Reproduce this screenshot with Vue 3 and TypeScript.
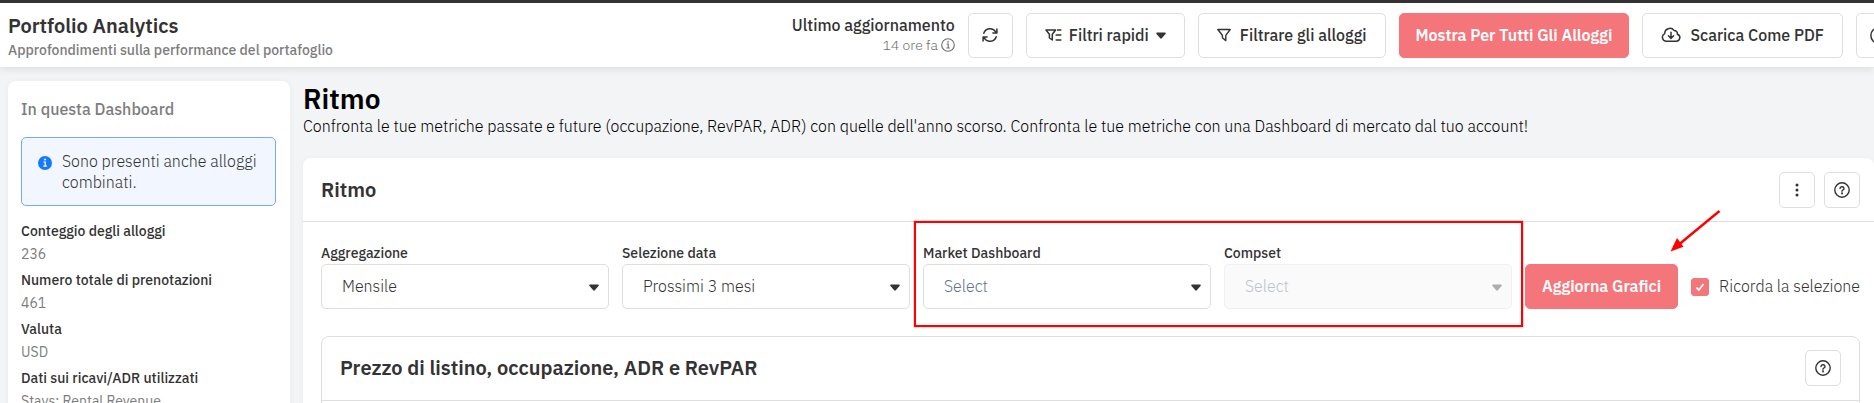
<script setup lang="ts">
import { ref } from 'vue'

interface Stat {
  label: string
  value: string
}

const stats: Stat[] = [
  { label: 'Conteggio degli alloggi', value: '236' },
  { label: 'Numero totale di prenotazioni', value: '461' },
  { label: 'Valuta', value: 'USD' },
  { label: 'Dati sui ricavi/ADR utilizzati', value: 'Stays: Rental Revenue' },
]

const aggregation = ref('Mensile')
const dateRange = ref('Prossimi 3 mesi')
const market = ref('')
const compset = ref('')
const remember = ref(true)
</script>

<template>
  <div class="page">
    <header class="topbar">
      <div class="heading">
        <h1>Portfolio Analytics</h1>
        <p>Approfondimenti sulla performance del portafoglio</p>
      </div>
      <div class="actions">
        <div class="updated">
          <strong>Ultimo aggiornamento</strong>
          <span>14 ore fa
            <svg width="14" height="14" viewBox="0 0 14 14" fill="none" stroke="currentColor">
              <circle cx="7" cy="7" r="6.3" stroke-width="1.1" />
              <path d="M5.6 6h1.6v4M5.4 10h3.4" stroke-width="1.1" />
              <circle cx="7" cy="3.9" r=".8" fill="currentColor" stroke="none" />
            </svg>
          </span>
        </div>
        <button class="btn square" type="button" aria-label="Aggiorna">
          <svg width="16" height="16" viewBox="0 0 16 16" fill="none" stroke="currentColor" stroke-width="1.5" stroke-linecap="round" stroke-linejoin="round">
            <path d="M1.8 6.3A6.5 6.5 0 0 1 13.7 5M14.9 2v4h-4M14.2 9.7A6.5 6.5 0 0 1 2.3 11M1.1 14v-4h4" />
          </svg>
        </button>
        <button class="btn quick" type="button">
          <svg width="17" height="14" viewBox="0 0 17 14" fill="none" stroke="currentColor" stroke-width="1.5" stroke-linejoin="round">
            <path d="M1 2h9.6L7.3 6.3V12L4.4 10V6.3zM12 2h4.4M10.6 7h5.8M10.6 12h5.8" />
          </svg>
          Filtri rapidi
          <svg class="caret" width="10" height="7" viewBox="0 0 10 7"><path d="M1 .5h8c.8 0 1 .8.5 1.4L6 6.1c-.6.7-1.4.7-2 0L.5 1.9C0 1.3.2.5 1 .5z" fill="currentColor" /></svg>
        </button>
        <button class="btn" type="button">
          <svg width="14" height="14" viewBox="0 0 14 14" fill="none" stroke="currentColor" stroke-width="1.4" stroke-linejoin="round">
            <path d="M.8 1.5h12.4L8.8 7.3v5.3L5.4 9.8V7.3z" />
          </svg>
          Filtrare gli alloggi
        </button>
        <button class="btn primary" type="button">Mostra Per Tutti Gli Alloggi</button>
        <button class="btn" type="button">
          <svg width="20" height="16" viewBox="0 0 20 16" fill="none" stroke="currentColor" stroke-width="1.5" stroke-linecap="round" stroke-linejoin="round">
            <path d="M5 14.2A4 4 0 0 1 3.7 6.6 5.2 5.2 0 0 1 13 3.4a3.4 3.4 0 0 1 3.4 3.8 3.6 3.6 0 0 1-1.2 7z" />
            <path d="M10 5.2v6M7.4 8.8l2.6 2.6 2.6-2.6" />
          </svg>
          Scarica Come PDF
        </button>
        <button class="btn square" type="button" aria-label="Aiuto">
          <svg width="17" height="17" viewBox="0 0 16 16" fill="none" stroke="currentColor" stroke-width="1.4" stroke-linecap="round">
            <circle cx="8" cy="8" r="7.2" /><path d="M6 6.5a2 1.8 0 1 1 2.7 1.7Q8 8.5 8 9.3" /><circle cx="8" cy="11.4" r=".4" />
          </svg>
        </button>
      </div>
    </header>

    <div class="body">
      <aside class="sidebar">
        <h2>In questa Dashboard</h2>
        <div class="notice">
          <svg width="14" height="14" viewBox="0 0 14 14">
            <circle cx="7" cy="7" r="7" fill="#1677ff" />
            <circle cx="7" cy="3.6" r="1" fill="#fff" />
            <path d="M5.5 6h1.7v4M5.3 10.2h3.6" fill="none" stroke="#fff" stroke-width="1.2" />
          </svg>
          <p>Sono presenti anche alloggi combinati.</p>
        </div>
        <dl>
          <template v-for="s in stats" :key="s.label">
            <dt>{{ s.label }}</dt>
            <dd>{{ s.value }}</dd>
          </template>
        </dl>
      </aside>

      <main class="main">
        <h2 class="section-title">Ritmo</h2>
        <p class="section-text">Confronta le tue metriche passate e future (occupazione, RevPAR, ADR) con quelle dell'anno scorso. Confronta le tue metriche con una Dashboard di mercato dal tuo account!</p>

        <section class="card">
          <div class="card-head">
            <h3>Ritmo</h3>
            <div class="tools">
              <button class="btn tool" type="button" aria-label="Altre opzioni">
                <svg width="4" height="14" viewBox="0 0 4 14" fill="currentColor"><circle cx="2" cy="2" r="1.5" /><circle cx="2" cy="7" r="1.5" /><circle cx="2" cy="12" r="1.5" /></svg>
              </button>
              <button class="btn tool" type="button" aria-label="Aiuto su Ritmo">
                <svg width="16" height="16" viewBox="0 0 16 16" fill="none" stroke="currentColor" stroke-width="1.4" stroke-linecap="round">
                  <circle cx="8" cy="8" r="7.2" /><path d="M6 6.5a2 1.8 0 1 1 2.7 1.7Q8 8.5 8 9.3" /><circle cx="8" cy="11.4" r=".4" />
                </svg>
              </button>
            </div>
          </div>

          <div class="filters">
            <div class="field">
              <label for="aggregation">Aggregazione</label>
              <div class="select">
                <select id="aggregation" v-model="aggregation"><option>Mensile</option></select>
                <svg class="caret" width="10" height="7" viewBox="0 0 10 7"><path d="M1 .5h8c.8 0 1 .8.5 1.4L6 6.1c-.6.7-1.4.7-2 0L.5 1.9C0 1.3.2.5 1 .5z" fill="currentColor" /></svg>
              </div>
            </div>
            <div class="field">
              <label for="dates">Selezione data</label>
              <div class="select">
                <select id="dates" v-model="dateRange"><option>Prossimi 3 mesi</option></select>
                <svg class="caret" width="10" height="7" viewBox="0 0 10 7"><path d="M1 .5h8c.8 0 1 .8.5 1.4L6 6.1c-.6.7-1.4.7-2 0L.5 1.9C0 1.3.2.5 1 .5z" fill="currentColor" /></svg>
              </div>
            </div>
            <div class="pair">
              <div class="field">
                <label for="market">Market Dashboard</label>
                <div class="select empty">
                  <select id="market" v-model="market"><option value="">Select</option></select>
                  <svg class="caret" width="10" height="7" viewBox="0 0 10 7"><path d="M1 .5h8c.8 0 1 .8.5 1.4L6 6.1c-.6.7-1.4.7-2 0L.5 1.9C0 1.3.2.5 1 .5z" fill="currentColor" /></svg>
                </div>
              </div>
              <div class="field">
                <label for="compset">Compset</label>
                <div class="select empty disabled">
                  <select id="compset" v-model="compset" disabled><option value="">Select</option></select>
                  <svg class="caret" width="10" height="7" viewBox="0 0 10 7"><path d="M1 .5h8c.8 0 1 .8.5 1.4L6 6.1c-.6.7-1.4.7-2 0L.5 1.9C0 1.3.2.5 1 .5z" fill="currentColor" /></svg>
                </div>
              </div>
            </div>
            <div class="update">
              <button class="btn primary" type="button">Aggiorna Grafici</button>
              <svg class="arrow" width="52" height="44" viewBox="0 0 52 44">
                <path d="M49.5 2 9.5 35" stroke="#f00" stroke-width="2.4" fill="none" />
                <path d="M.5 42.5 7 29l6.500 8.700z" fill="#f00" />
              </svg>
            </div>
            <label class="remember">
              <input v-model="remember" type="checkbox" />
              Ricorda la selezione
            </label>
          </div>

          <section class="panel">
            <div class="panel-head">
              <h3>Prezzo di listino, occupazione, ADR e RevPAR</h3>
              <button class="btn tool" type="button" aria-label="Aiuto sul grafico">
                <svg width="16" height="16" viewBox="0 0 16 16" fill="none" stroke="currentColor" stroke-width="1.4" stroke-linecap="round">
                  <circle cx="8" cy="8" r="7.2" /><path d="M6 6.5a2 1.8 0 1 1 2.7 1.7Q8 8.5 8 9.3" /><circle cx="8" cy="11.4" r=".4" />
                </svg>
              </button>
            </div>
          </section>
        </section>
      </main>
    </div>
  </div>
</template>

<style>
body {
  background: #f3f4f6;
  overflow: hidden;
}
</style>

<style scoped>
.page {
  height: 100vh;
  overflow: hidden;
  box-sizing: border-box;
  border-top: 3px solid #333;
  font-family: "IBM Plex Sans", Roboto, "Liberation Sans", sans-serif;
  font-size: 16px;
  line-height: 21px;
  font-weight: 300;
  color: #333;
}
h1, h2, h3, p, dl, dd {
  margin: 0;
}
.topbar {
  position: relative;
  display: flex;
  align-items: center;
  justify-content: space-between;
  height: 64px;
  padding: 0 0 0 8px;
  background: #fff;
  box-shadow: 0 2px 8px rgba(0, 0, 0, 0.1);
}
.heading {
  padding-top: 5px;
}
h1 {
  font-size: 20px;
  line-height: 26px;
  font-weight: 600;
}
.heading p {
  font-size: 14px;
  line-height: 23px;
  font-weight: 500;
  color: #7d7d7d;
}
/* The last action runs past the window's right edge. */
.actions {
  display: flex;
  align-items: center;
  gap: 13px;
  margin-right: -27px;
  flex: none;
}
.updated {
  display: flex;
  flex-direction: column;
  align-items: flex-end;
  line-height: 20px;
}
.updated strong {
  font-weight: 500;
}
.updated span {
  display: flex;
  align-items: center;
  gap: 3px;
  font-size: 14px;
  color: #6d6d6d;
}
.btn {
  display: inline-flex;
  align-items: center;
  justify-content: center;
  gap: 9px;
  box-sizing: border-box;
  height: 45px;
  padding: 0 18px;
  border: 1px solid #dedede;
  border-radius: 5px;
  background: #fff;
  color: #333;
  font: inherit;
  font-weight: 500;
  white-space: nowrap;
  cursor: pointer;
}
.btn svg {
  flex: none;
}
.btn.quick {
  gap: 7px;
}
.btn.square {
  width: 45px;
  padding: 0;
}
.btn.tool {
  width: 36px;
  height: 36px;
  padding: 0;
}
.btn.primary {
  padding: 0 16px;
  border-color: #f4757a;
  background: #f4757a;
  color: #fff;
  font-weight: 600;
}
.body {
  display: flex;
  align-items: flex-start;
  gap: 13px;
  padding: 14px 0 0 8px;
}
.sidebar {
  flex: none;
  width: 282px;
  box-sizing: border-box;
  padding: 18px 14px 24px 13px;
  border-radius: 8px;
  background: #fff;
  box-shadow: 0 0 6px rgba(0, 0, 0, 0.04);
}
.sidebar h2 {
  font-size: 16px;
  font-weight: 500;
  color: #7d7d7d;
}
.notice {
  display: flex;
  gap: 10px;
  margin-top: 17px;
  padding: 13px 8px 12px 16px;
  border: 1px solid #76a9f8;
  border-radius: 5px;
  background: #f2f7ff;
}
.notice svg {
  flex: none;
  margin-top: 5px;
}
dl {
  margin-top: 14px;
  font-size: 14px;
  line-height: 23px;
}
dt {
  font-weight: 500;
}
dd {
  margin-bottom: 3px;
  font-weight: 400;
  color: #7d7d7d;
}
.main {
  flex: 1;
  min-width: 0;
}
.section-title {
  font-size: 28px;
  line-height: 35px;
  font-weight: 600;
  color: #000;
}
.section-text {
  line-height: 20px;
  color: #000;
}
.card {
  margin-top: 22px;
  border-radius: 8px;
  background: #fff;
  box-shadow: 0 0 6px rgba(0, 0, 0, 0.04);
}
.card-head {
  display: flex;
  align-items: center;
  justify-content: space-between;
  padding: 14px 14px 13px 18px;
  border-bottom: 1px solid #dedede;
}
h3 {
  font-size: 20px;
  line-height: 26px;
  font-weight: 600;
}
.tools {
  display: flex;
  gap: 9px;
}
.filters {
  display: flex;
  align-items: flex-end;
  gap: 13px;
  padding: 20px 14px 27px 18px;
}
.field {
  flex: 1 1 0;
  min-width: 0;
}
.field label {
  display: block;
  font-size: 14px;
  line-height: 22px;
  font-weight: 500;
}
.pair {
  position: relative;
  display: flex;
  flex: 2 1 13px;
  gap: 13px;
}
.pair::after {
  content: "";
  position: absolute;
  inset: -21px -11px -18px -9px;
  border: 2px solid #f00;
  box-shadow: 0 0 1px #f00;
  pointer-events: none;
}
.select {
  position: relative;
}
.select select {
  display: block;
  width: 100%;
  height: 45px;
  padding: 0 36px 0 20px;
  border: 1px solid #dedede;
  border-radius: 5px;
  background: #fff;
  color: #333;
  font: inherit;
  appearance: none;
}
.select .caret {
  position: absolute;
  top: 20px;
  right: 10px;
  pointer-events: none;
}
.select.empty select {
  color: #64748b;
}
.select.disabled select {
  border-color: #f0f0f0;
  background: #fafafa;
  color: #bcc3cd;
  opacity: 1;
}
.select.disabled .caret {
  color: #adadad;
}
.update {
  position: relative;
}
.arrow {
  position: absolute;
  right: -44px;
  bottom: 56px;
  pointer-events: none;
}
.remember {
  display: flex;
  align-items: center;
  gap: 10px;
  height: 45px;
  white-space: nowrap;
}
.remember input {
  appearance: none;
  width: 18px;
  height: 18px;
  margin: 0;
  border-radius: 3px;
  border: 1px solid #dedede;
  background: #fff;
}
.remember input:checked {
  border-color: #f4757a;
  background: #f4757a url("data:image/svg+xml,%3Csvg xmlns='http://www.w3.org/2000/svg' viewBox='0 0 16 16'%3E%3Cpath d='M4.5 8.5l2.3 2.5 4.7-6' fill='none' stroke='white' stroke-width='1.8'/%3E%3C/svg%3E") center / 16px no-repeat;
}
.panel {
  margin: 0 14px 0 18px;
  border: 1px solid #dedede;
  border-radius: 8px;
  min-height: 160px;
}
.panel-head {
  display: flex;
  align-items: center;
  justify-content: space-between;
  padding: 13px 18px 14px;
  border-bottom: 1px solid #dedede;
}
</style>
